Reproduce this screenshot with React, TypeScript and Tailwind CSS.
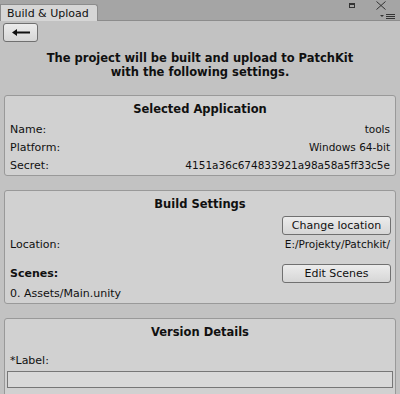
import React from 'react';

function Row({ label, value }: { label: string; value: string }) {
  return (
    <div className="flex justify-between items-center h-[18px] px-[5px]">
      <span>{label}</span>
      <span className="text-[10.5px]">{value}</span>
    </div>
  );
}

function Button({ children, className = '' }: { children: React.ReactNode; className?: string }) {
  return (
    <div
      className={`flex items-center justify-center border border-[#707070] rounded-[3px] bg-gradient-to-b from-[#ececec] to-[#d6d6d6] ${className}`}
    >
      {children}
    </div>
  );
}

function Panel({ title, children, className = '' }: { title: string; children: React.ReactNode; className?: string }) {
  return (
    <div className={`mx-[4px] border border-[#999999] rounded-[3px] bg-[#d1d1d1] ${className}`}>
      <div className="h-[20px] pt-[7px] text-center font-bold text-[11.5px] leading-[13px]">{title}</div>
      {children}
    </div>
  );
}

export default function App() {
  return (
    <div
      className="w-[400px] h-[394px] overflow-hidden bg-[#c2c2c2] text-[11px] text-[#101010] leading-none"
      style={{ fontFamily: '"DejaVu Sans", sans-serif' }}
    >
      {/* window tab bar */}
      <div className="relative h-[21px] bg-[#a5a5a5] border-b border-[#8c8c8c] flex items-end">
        <div className="h-[17px] w-[98px] bg-[#d6d6d6] border border-b-0 border-[#8c8c8c] rounded-tr-[3px] flex items-center pl-[6px] text-[11px] -mb-[1px]">
          Build &amp; Upload
        </div>
        <div className="absolute right-[45px] top-[3px] w-[6px] h-[5px] border border-[#333] border-t-2" />
        <svg className="absolute right-[14px] top-[1px]" width="10" height="9" viewBox="0 0 10 9">
          <path d="M0.5 0.5 L9.5 8.5 M9.5 0.5 L0.5 8.5" stroke="#333" strokeWidth="1" />
        </svg>
        <svg className="absolute right-[5px] top-[14px]" width="15" height="6" viewBox="0 0 15 6">
          <path d="M0 1 H4 L2 3 Z" fill="#333" />
          <path d="M6 0.5 H15 M6 2.5 H15 M6 4.5 H15" stroke="#333" strokeWidth="1" />
        </svg>
      </div>

      <div className="pt-[2px]">
        <Button className="ml-[3px] w-[35px] h-[19px]">
          <svg width="18" height="7" viewBox="0 0 18 7">
            <path d="M0 3.5 L5 0 V2.5 H18 V4.5 H5 V7 Z" fill="#111" />
          </svg>
        </Button>

        <div className="mt-[9px] text-center font-bold text-[11.5px] leading-[14px]">
          <div>The project will be built and upload to PatchKit</div>
          <div>with the following settings.</div>
        </div>

        <Panel title="Selected Application" className="mt-[16px] h-[81px]">
          <div className="pt-[4px]">
            <Row label="Name:" value="tools" />
            <Row label="Platform:" value="Windows 64-bit" />
            <Row label="Secret:" value="4151a36c674833921a98a58a5ff33c5e" />
          </div>
        </Panel>

        <Panel title="Build Settings" className="mt-[14px] h-[114px]">
          <div className="flex justify-end px-[4px] pt-[5px]">
            <Button className="w-[109px] h-[19px]">Change location</Button>
          </div>
          <Row label="Location:" value="E:/Projekty/Patchkit/" />
          <div className="flex justify-between items-start px-[5px] pt-[11px]">
            <span className="font-bold pt-[4px]">Scenes:</span>
            <Button className="w-[109px] h-[19px] -mr-[1px]">Edit Scenes</Button>
          </div>
          <div className="px-[5px] pt-[5px]">0. Assets/Main.unity</div>
        </Panel>

        <Panel title="Version Details" className="mt-[14px] h-[90px]">
          <div className="px-[5px] pt-[16px]">*Label:</div>
          <div className="mx-[2px] mt-[5px] h-[17px] border border-[#777] bg-[#d9d9d9]" />
        </Panel>
      </div>
    </div>
  );
}
